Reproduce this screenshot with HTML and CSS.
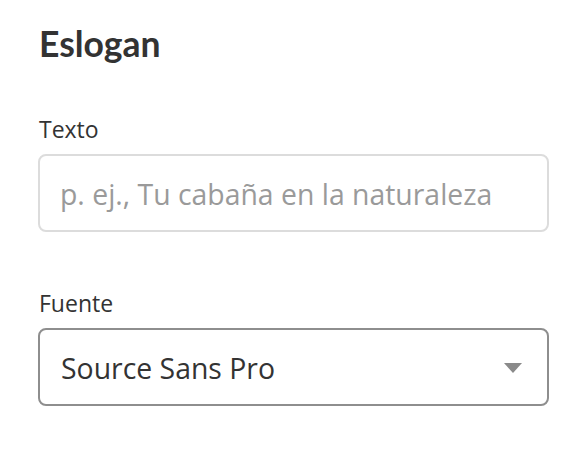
FILE: index.html
```html
<!DOCTYPE html>
<html lang="es">
<head>
<meta charset="utf-8">
<link rel="stylesheet" href="styles.css">
</head>
<body>
<section class="panel">
  <h2 class="title">Eslogan</h2>
  <div class="field field-first">
    <label class="label" for="txt">Texto</label>
    <input class="input" id="txt" type="text" placeholder="p. ej., Tu cabaña en la naturaleza">
  </div>
  <div class="field">
    <label class="label" for="font">Fuente</label>
    <div class="select">
      <span class="select-value">Source Sans Pro</span>
      <svg class="caret" width="18" height="10" viewBox="0 0 18 10"><path d="M0 0 H18 L9 10 Z" fill="#8a8a8a"/></svg>
    </div>
  </div>
</section>
</body>
</html>
```
FILE: styles.css
```css
html, body {
  margin: 0;
  padding: 0;
  background: #ffffff;
}
body {
  font-family: "Open Sans", "Liberation Sans", sans-serif;
  color: #333333;
}
.panel {
  padding: 22px 35px 0 38px;
  display: flex;
  flex-direction: column;
}
.title {
  margin: 0 0 0 1px;
  font-family: Lato, "Liberation Sans", sans-serif;
  font-size: 35.5px;
  line-height: 44px;
  font-weight: 700;
  color: #333333;
}
.field {
  display: flex;
  flex-direction: column;
}
.field-first {
  margin-top: 48px;
  margin-bottom: 56px;
}
.label {
  font-size: 23px;
  line-height: 30px;
  color: #333333;
  margin-left: 1px;
  margin-bottom: 10px;
}
.input {
  box-sizing: border-box;
  height: 78px;
  border: 2px solid #dcdcdc;
  border-radius: 8px;
  padding: 2px 20px 0;
  font-family: "Open Sans", "Liberation Sans", sans-serif;
  font-size: 28.4px;
  color: #333333;
  outline: none;
}
.input::placeholder {
  color: #9a9a9a;
}
.select {
  box-sizing: border-box;
  height: 78px;
  border: 2px solid #8e8e8e;
  border-radius: 8px;
  padding: 2px 25px 0 21px;
  display: flex;
  align-items: center;
  justify-content: space-between;
}
.select-value {
  font-size: 28.4px;
  color: #333333;
}
.caret {
  display: block;
}
```
